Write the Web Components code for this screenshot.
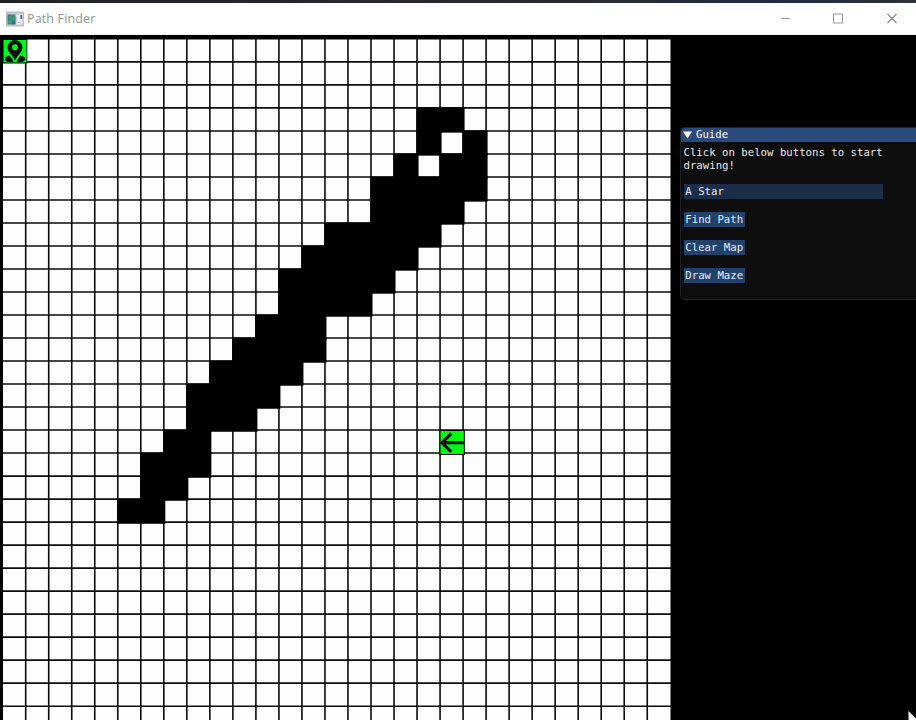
<!DOCTYPE html>
<html lang="en">
<head>
<meta charset="utf-8">
<title>Path Finder</title>
<style>
html,body{margin:0;background:#000;overflow:hidden}
body{width:916px;height:720px}
</style>
</head>
<body>
<path-finder-app></path-finder-app>
<script>
const define = (name, html, setup) => customElements.define(name, class extends HTMLElement {
  connectedCallback() {
    if (this.shadowRoot) return;
    const t = document.createElement('template');
    t.innerHTML = html;
    this.attachShadow({mode: 'open'}).append(t.content.cloneNode(true));
    if (setup) setup(this.shadowRoot, this);
  }
});

define('title-bar', `<style>
:host{display:flex;height:32px;box-sizing:border-box;background:#fff;align-items:center;padding-left:6px;border-bottom:1px solid #f1f1f1;color:#929292;font:12.5px/16px "Open Sans","Noto Sans",sans-serif;letter-spacing:.15px}
.name{margin-left:3px;flex:1}
.name span{display:inline-block;padding-top:1px}
svg{display:block}
</style>
<svg width="18" height="16" viewBox="0 0 18 16">
<defs><linearGradient id="g" x1="0" y1="0" x2="1" y2="1"><stop offset="0" stop-color="#3f6ba0"/><stop offset=".5" stop-color="#3a9577"/><stop offset="1" stop-color="#3d5f90"/></linearGradient></defs>
<rect x=".5" y="1" width="17" height="14" fill="#c4c9cd" stroke="#aeb4b8" stroke-width=".8"/>
<rect x="1.5" y="3.5" width="8" height="10" fill="url(#g)"/>
<path d="M3 5h2v2H3zM6 7h2v2H6zM3 10h2v2H3z" fill="#39a35d"/>
<rect x="10.7" y="3.5" width="5.8" height="10" fill="#edf1f4"/>
<path d="M15.3 4v4" stroke="#315a8c" stroke-width="1.6"/><path d="M12 11.5h3" stroke="#bcc3c8"/>
</svg>
<div class="name"><span>Path Finder</span></div>
<svg class="controls" width="136" height="32" viewBox="780 3 136 32" fill="none" stroke="#999" stroke-width="1">
<path d="M781 18.5h9"/><rect x="833.5" y="14" width="9" height="9"/><path d="M887.5 14l9 9M896.500 14l-9 9" stroke="#888" stroke-width="1.1"/>
</svg>`);

define('maze-map', `<style>:host{display:block;width:671px;height:685px;flex:none}svg{display:block}</style>
<svg width="671" height="685" viewBox="0 35 671 685">
<rect y="35" width="671" height="685" fill="#000"/>
<rect x="3" y="39.500" width="667.500" height="681" fill="#fdfdfd"/>
<g id="lines" stroke="#0b0b0b" stroke-width="1.6"></g>
<g id="walls" fill="#000"></g>
<g><rect x="2" y="39" width="25.300" height="24.500" fill="#000"/><rect x="3.500" y="40" width="23" height="22.500" fill="#00f51b"/>
<path d="M15 40a7.400 7.400 0 0 0-7.400 7.400c0 4.500 4.400 7 7.400 12.800 3-5.800 7.400-8.300 7.400-12.800A7.400 7.400 0 0 0 15 40z" fill="#06120a"/>
<circle cx="15" cy="47.200" r="2.900" fill="#00f51b"/>
<path d="M9.500 55.500c-2.300.4-4.700 1.700-4.700 3.600 0 2 2.900 3.300 7 3.400l1.700-.7c-.8-1.900-2.300-4.300-4-6.300zM20.500 55.500c2.300.4 4.700 1.700 4.700 3.600 0 2-2.900 3.300-7 3.400l-1.700-.7c.8-1.900 2.300-4.300 4-6.300z" fill="#06120a"/></g>
<g><rect x="439.500" y="430" width="25.300" height="25" fill="#000"/><rect x="440.500" y="431" width="23.300" height="23" fill="#00fa12"/>
<path d="M464 442.700H442.500M451.300 433.500L442 442.700l9.300 9.100" fill="none" stroke="#041006" stroke-width="3.200"/></g>
</svg>`, root => {
  const ns = 'http://www.w3.org/2000/svg';
  const add = (parent, tag, attrs) => {
    const e = document.createElementNS(ns, tag);
    for (const k in attrs) e.setAttribute(k, attrs[k]);
    root.getElementById(parent).append(e);
  };
  for (let i = 0; i < 28; i++) add('lines', 'path', {d: `M${25.7 + 23.02 * i} 39V720`});
  for (let i = 0; i < 30; i++) add('lines', 'path', {d: `M3 ${61.9 + 23.01 * i}H671`});
  // [row, first column, last column]
  const runs = [[3,18,19],[4,18,18],[4,20,20],[5,17,17],[5,19,20],[6,16,20],[7,16,20],[7,16,19],[8,14,18],[9,13,17],[10,12,16],[11,12,15],[12,11,13],[13,10,13],[14,9,12],[15,8,11],[16,8,10],[17,7,8],[18,6,8],[19,6,7],[20,5,6]].filter(([r, a, b]) => !(r === 7 && b === 20));
  for (const [r, a, b] of runs)
    add('walls', 'rect', {x: 2 + 23.02 * a, y: 38.4 + 23.01 * r, width: 23.02 * (b - a) + 25.2, height: 25.2});
});

define('gui-button', `<style>
:host{display:block;width:max-content;height:15px;margin-bottom:12.7px;padding:0 1.700px;box-sizing:border-box;background:#22426c;color:#e4edf7;line-height:15px;white-space:pre}
:host([combo]){width:199px;background:#1b2d49}
</style><slot></slot>`);

define('guide-panel', `<style>
:host{display:block;margin:92px 0 0 9px;height:172.500px;box-sizing:border-box;background:#0e0e0e;border:1px solid #202023;border-right:0;border-radius:5px 0 0 5px;overflow:hidden;color:#e8e8e8;font:10.680px/13.800px "DejaVu Sans Mono",monospace}
header{display:flex;align-items:center;height:14px;background:#294a7a;color:#fff;gap:4px;padding-left:2px}
p{margin:3.500px 0 11.400px 2.500px;white-space:pre}
.items{padding-left:2.600px}
</style>
<header><svg width="9" height="8"><path d="M0 .5h9L4.500 7.500z" fill="#fff"/></svg><span>Guide</span></header>
<p>Click on below buttons to start
drawing!</p>
<div class="items"><slot></slot></div>`);

define('path-finder-app', `<style>
:host{display:flex;flex-direction:column;width:916px;height:720px;background:#000;position:relative;overflow:hidden}
.strip{height:3px;background:linear-gradient(90deg,#222326,#292b30 65%,#202c40 85%,#303238)}
main{display:flex;flex:1}
.side{flex:1;min-width:0}
.cursor{position:absolute;left:908px;top:710px}
</style>
<div class="strip"></div><title-bar></title-bar>
<main><maze-map></maze-map><div class="side"><guide-panel>
<gui-button combo>A Star</gui-button><gui-button>Find Path</gui-button><gui-button>Clear Map</gui-button><gui-button>Draw Maze</gui-button>
</guide-panel></div></main>
<svg class="cursor" width="8" height="10"><path d="M.5 1L8 8.500V10H.5z" fill="#fff"/></svg>`);
</script>
</body>
</html>
